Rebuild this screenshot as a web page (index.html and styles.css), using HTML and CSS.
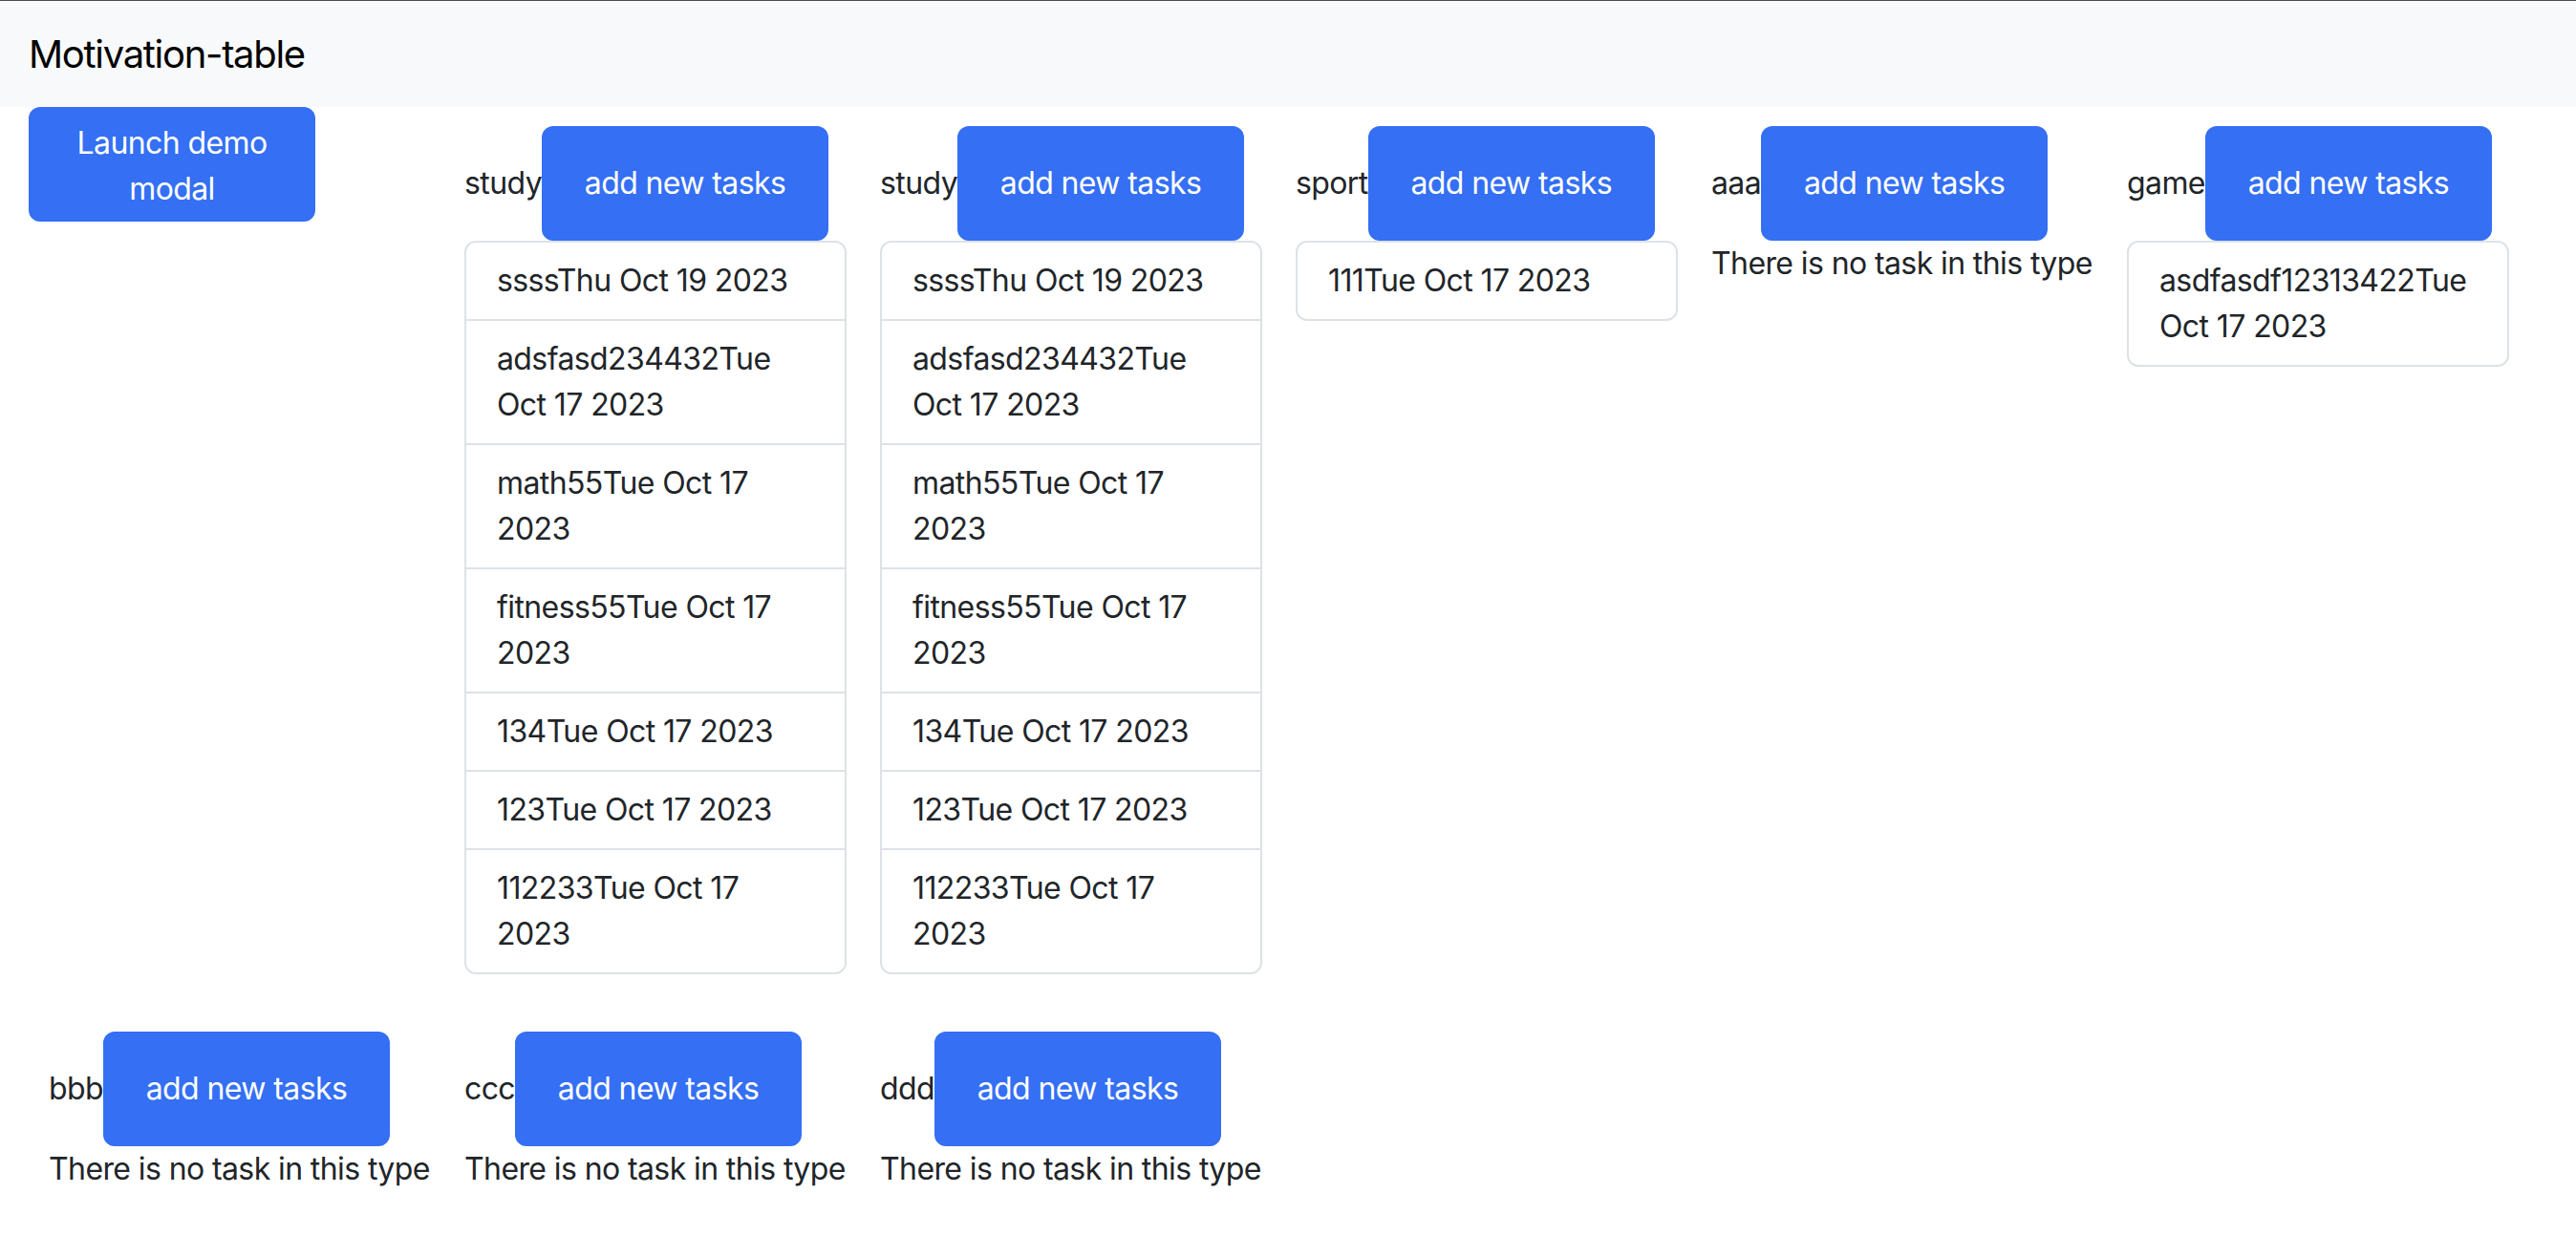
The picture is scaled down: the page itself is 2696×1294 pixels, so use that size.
FILE: index.html
```html
<!DOCTYPE html>
<html lang="en">
<head>
<meta charset="utf-8">
<title>Motivation-table</title>
<link rel="stylesheet" href="styles.css">
</head>
<body>
<nav class="navbar">
  <span class="brand">Motivation-table</span>
</nav>
<main class="board">
  <div class="cell launch-cell">
    <button class="btn">Launch demo modal</button>
  </div>

  <div class="cell">
    <div class="head"><span class="label">study</span><button class="btn">add new tasks</button></div>
    <ul class="list">
      <li>ssssThu Oct 19 2023</li>
      <li>adsfasd234432Tue Oct 17 2023</li>
      <li>math55Tue Oct 17 2023</li>
      <li>fitness55Tue Oct 17 2023</li>
      <li>134Tue Oct 17 2023</li>
      <li>123Tue Oct 17 2023</li>
      <li>112233Tue Oct 17 2023</li>
    </ul>
  </div>

  <div class="cell">
    <div class="head"><span class="label">study</span><button class="btn">add new tasks</button></div>
    <ul class="list">
      <li>ssssThu Oct 19 2023</li>
      <li>adsfasd234432Tue Oct 17 2023</li>
      <li>math55Tue Oct 17 2023</li>
      <li>fitness55Tue Oct 17 2023</li>
      <li>134Tue Oct 17 2023</li>
      <li>123Tue Oct 17 2023</li>
      <li>112233Tue Oct 17 2023</li>
    </ul>
  </div>

  <div class="cell">
    <div class="head"><span class="label">sport</span><button class="btn">add new tasks</button></div>
    <ul class="list">
      <li>111Tue Oct 17 2023</li>
    </ul>
  </div>

  <div class="cell">
    <div class="head"><span class="label">aaa</span><button class="btn">add new tasks</button></div>
    <p class="empty">There is no task in this type</p>
  </div>

  <div class="cell">
    <div class="head"><span class="label">game</span><button class="btn">add new tasks</button></div>
    <ul class="list">
      <li>asdfasdf12313422Tue Oct 17 2023</li>
    </ul>
  </div>

  <div class="cell">
    <div class="head"><span class="label">bbb</span><button class="btn">add new tasks</button></div>
    <p class="empty">There is no task in this type</p>
  </div>

  <div class="cell">
    <div class="head"><span class="label">ccc</span><button class="btn">add new tasks</button></div>
    <p class="empty">There is no task in this type</p>
  </div>

  <div class="cell">
    <div class="head"><span class="label">ddd</span><button class="btn">add new tasks</button></div>
    <p class="empty">There is no task in this type</p>
  </div>
</main>
</body>
</html>
```

FILE: styles.css
```css
* {
  box-sizing: border-box;
}

html, body {
  margin: 0;
  padding: 0;
  background: #ffffff;
}

body {
  font-family: Inter, "Noto Sans", "Liberation Sans", sans-serif;
  font-size: 32px;
  line-height: 48px;
  letter-spacing: -0.6px;
  color: #212529;
}

.navbar {
  height: 112px;
  border-top: 1px solid #4d4d4d;
  background: #f8f9fa;
  display: flex;
  align-items: center;
  padding-left: 30px;
}

.brand {
  font-size: 40px;
  line-height: 60px;
  letter-spacing: -1.3px;
  color: #000000;
}

.board {
  display: grid;
  grid-template-columns: repeat(6, 400px);
  column-gap: 35px;
  row-gap: 40px;
  padding-left: 51px;
  align-items: start;
}

.cell {
  margin-top: 20px;
  min-width: 0;
}

.launch-cell {
  margin-top: 0;
  margin-left: -21px;
}

.btn {
  width: 300px;
  height: 120px;
  padding: 12px 24px;
  border: 2px solid #346ff4;
  border-radius: 12px;
  background: #346ff4;
  color: #ffffff;
  font-family: inherit;
  font-size: 32px;
  line-height: 48px;
  letter-spacing: -0.6px;
  text-align: center;
  cursor: pointer;
}

.head {
  display: flex;
  align-items: baseline;
  white-space: nowrap;
}

.label {
  font-size: 32px;
}

.list {
  list-style: none;
  margin: 0;
  padding: 0;
  width: 400px;
  border: 2px solid #dee2e6;
  border-radius: 12px;
}

.list li {
  padding: 16px 32px;
  border-bottom: 2px solid #dee2e6;
}

.list li:last-child {
  border-bottom: 0;
}

.empty {
  margin: 0;
  white-space: nowrap;
}
```
